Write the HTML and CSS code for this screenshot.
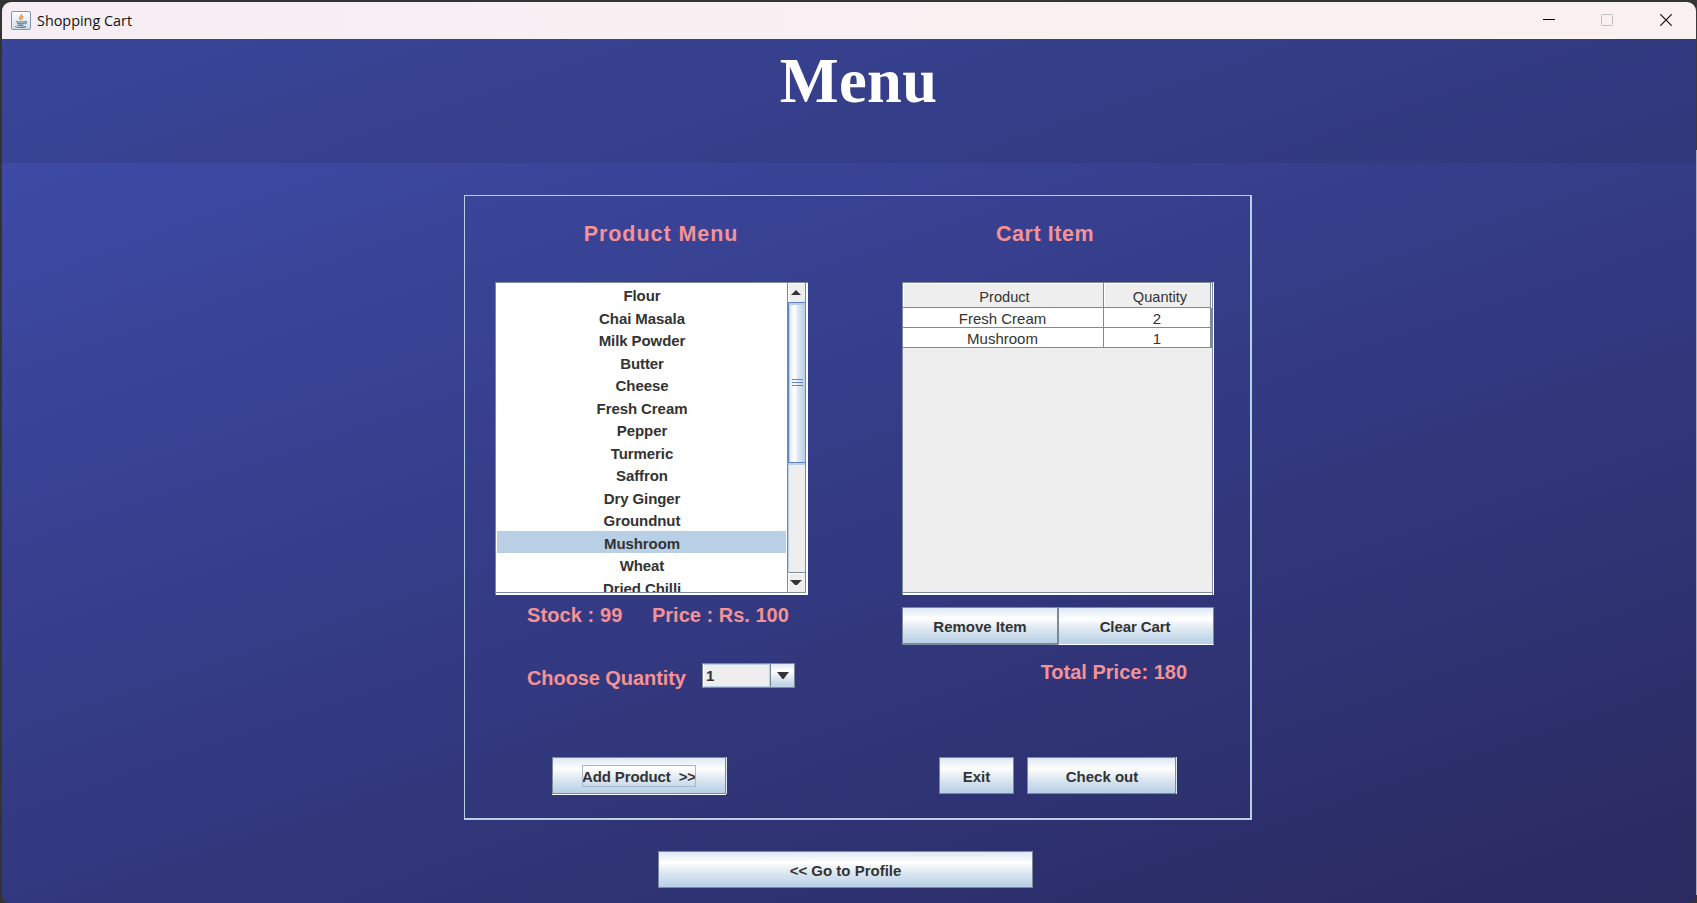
FILE: index.html
```html
<!DOCTYPE html>
<html lang="en">
<head>
<meta charset="utf-8">
<title>Shopping Cart</title>
<link rel="stylesheet" href="styles.css">
</head>
<body>
<div class="window">
  <header class="titlebar">
    <svg class="app-icon" width="20" height="20" viewBox="0 0 20 20">
      <defs><linearGradient id="ig" x1="0" y1="0" x2="0" y2="1"><stop offset="0" stop-color="#fff"/><stop offset="1" stop-color="#cfdce6"/></linearGradient></defs>
      <rect x=".5" y=".5" width="19" height="18" rx="1.5" fill="url(#ig)" stroke="#7d97ab"/>
      <path d="M10.500 3.200c1.200 1.600-2.600 2.600-1.800 4.300.4.8 1 1.100 1.200 1.800M12.300 5.400c-1.600.9-2 1.700-1.100 2.900" fill="none" stroke="#e8873e" stroke-width="1.400"/>
      <path d="M5 10.500c2 .7 6.500.7 9 0M6 12.300c2 .6 5.500.6 7.200 0M6.500 14c2 .6 4.500.6 6 0M4 15.800c3 .9 8.500.9 11-.2M14 10.600c2-.4 1.900 1.700-.4 2.300" fill="none" stroke="#5f8196" stroke-width="1.200"/>
    </svg>
    <span class="title">Shopping Cart</span>
    <div class="controls">
      <svg width="12" height="12" viewBox="0 0 12 12"><path d="M0 5.500h12" stroke="#000"/></svg>
      <svg width="12" height="12" viewBox="0 0 12 12"><rect x=".5" y=".5" width="11" height="11" rx="1" fill="none" stroke="#c3bfc0"/></svg>
      <svg class="close" width="12" height="12" viewBox="0 0 12 12"><path d="M.3.3l11.400 11.400M11.700.3L.3 11.700" stroke="#111" stroke-width="1.200"/></svg>
    </div>
  </header>
  <main class="content">
    <div class="banner"><h1>Menu</h1></div>
    <section class="panel">
      <div class="col products">
        <h2>Product Menu</h2>
        <div class="list">
          <ul>
            <li>Flour</li><li>Chai Masala</li><li>Milk Powder</li><li>Butter</li><li>Cheese</li><li>Fresh Cream</li><li>Pepper</li><li>Turmeric</li><li>Saffron</li><li>Dry Ginger</li><li>Groundnut</li><li class="selected">Mushroom</li><li>Wheat</li><li>Dried Chilli</li>
          </ul>
          <div class="scrollbar">
            <div class="arrow up"><svg width="10" height="5" viewBox="0 0 10 5"><path d="M5 0l5 5H0z" fill="#333"/></svg></div>
            <div class="thumb"><i></i><i></i><i></i></div>
            <div class="track"></div>
            <div class="arrow down"><svg width="12" height="5" viewBox="0 0 12 5"><path d="M0 0h12L7 5H5z" fill="#333"/></svg></div>
          </div>
        </div>
        <div class="info"><span class="stock">Stock : 99</span><span class="price">Price : Rs. 100</span></div>
        <div class="quantity">
          <label>Choose Quantity</label>
          <div class="combo"><span>1</span><b><svg width="12" height="7" viewBox="0 0 12 7"><path d="M0 0h12L6.500 7h-1z" fill="#333"/></svg></b></div>
        </div>
        <button class="btn add"><span>Add Product&nbsp; &gt;&gt;</span></button>
      </div>
      <div class="col cart">
        <h2>Cart Item</h2>
        <div class="table">
          <div class="tr th"><span>Product</span><span>Quantity</span></div>
          <div class="tr"><span>Fresh Cream</span><span>2</span></div>
          <div class="tr"><span>Mushroom</span><span>1</span></div>
        </div>
        <div class="pair"><button class="btn remove">Remove Item</button><button class="btn clear">Clear Cart</button></div>
        <p class="total">Total Price: 180</p>
        <div class="actions"><button class="btn exit">Exit</button><button class="btn checkout">Check out</button></div>
      </div>
    </section>
    <button class="btn profile">&lt;&lt; Go to Profile</button>
  </main>
</div>
</body>
</html>
```
FILE: styles.css
```css
* { box-sizing: border-box; }
body { margin: 0; height: 903px; overflow: hidden; background: linear-gradient(#3a3a3a 150px, #a9abb8 150px, #a9abb8 895px, #333 895px) right / 1px 100% no-repeat #343434; font-family: "Liberation Sans", Arial, sans-serif; color: #333; }
.window { margin: 2px 1px 0 2px; height: 901px; border-radius: 9px 9px 8px 8px; overflow: hidden; display: flex; flex-direction: column; }
.titlebar { height: 37px; flex: none; display: flex; align-items: center; padding: 0 24px 0 9px; background: linear-gradient(90deg, #f7eef5, #f9f0f1 70%); }
.app-icon { flex: none; }
.title { margin: 0 0 0 6px; font: 14.4px "Open Sans", sans-serif; color: #111; white-space: nowrap; }
.controls { margin: -1px 0 0 auto; display: flex; gap: 46px; }
.controls svg { display: block; }
.controls .close { margin-left: 1px; }
.content { flex: 1; display: flex; flex-direction: column; background: linear-gradient(161deg, #3f4dab 0%, #2a2a60 100%); }
.banner { height: 124px; flex: none; background: rgba(33, 42, 82, .2); padding-left: 19px; text-align: center; }
h1 { margin: 0; padding-top: 6px; font: bold 62.5px/72px "Liberation Serif", "Times New Roman", serif; letter-spacing: .3px; color: #fff; }
.panel { width: 788px; height: 625px; margin: 32px 0 0 462px; border: solid #b8cfe5; border-width: 1px 2px 2px 1px; display: flex; flex: none; padding: 0 36px 0 30px; justify-content: space-between; }
h2 { margin: 0; padding-top: 25px; height: 86px; font-size: 21.5px; line-height: 27px; text-align: center; color: #f59295; letter-spacing: .95px; white-space: nowrap; }
.cart h2 { letter-spacing: .55px; padding-right: 26px; }
.products { width: 313px; }
.products h2 { padding-left: 19px; }
.cart { width: 312px; }
.list { height: 313px; border: solid #7a8a99; border-width: 1px 0 0 1px; background: #fff; display: flex; }
ul { list-style: none; margin: 0; padding: 0 1px; width: 291px; height: 310px; overflow: hidden; font-weight: bold; font-size: 15px; letter-spacing: -.08px; border-bottom: 1px solid #7a8a99; }
li { height: 22.5px; line-height: 25px; text-align: center; padding-left: 1px; }
li.selected { background: #b8cfe5; }
.scrollbar { width: 19px; height: 310px; border: solid #7a8a99; border-width: 0 1px 1px; display: flex; flex-direction: column; background: #eee; }
.arrow { height: 19px; flex: none; background: #eee; border: solid #fff; border-width: 1px 0 0 1px; display: flex; align-items: center; justify-content: center; padding: 0 2px 1px 0; }
.arrow.down { height: 20px; border-top: 1px solid #7a8a99; box-shadow: inset 0 1px #fff; }
.thumb { height: 161px; flex: none; border: solid #6382bf; border-width: 1px 0 1px 1px; box-shadow: inset 0 2px #b8cfe5, inset 1px 0 #b8cfe5; background: linear-gradient(90deg, #dbe6f1, #fff 35%, #dae6f0 60%, #b8cfe5); display: flex; flex-direction: column; align-items: center; justify-content: center; gap: 2px; }
.thumb i { width: 11px; height: 1px; background: #6382bf; }
.track { flex: 1; border: solid #b8cfe5; border-width: 2px 0 0 1px; }
.info { display: flex; padding-left: 32px; height: 62px; font-size: 20px; font-weight: bold; color: #f59295; line-height: 40px; white-space: pre; }
.stock { width: 125px; letter-spacing: .1px; }
.quantity { display: flex; padding-left: 32px; height: 100px; color: #f59295; font-size: 20px; font-weight: bold; }
.quantity label { width: 175px; line-height: 42px; letter-spacing: -.08px; white-space: nowrap; }
.combo { margin-top: 6px; width: 93px; height: 25px; border: 1px solid #7a8a99; display: flex; font-size: 15px; color: #333; background: #eee; }
.combo span { width: 67px; line-height: 22px; padding-left: 2px; border: 1px solid #b8cfe5; border-left-color: #fff; }
.combo b { flex: 1; border-left: 1px solid #7a8a99; background: linear-gradient(#dde8f3, #fff 30%, #dae5f0 65%, #b8cfe5); display: flex; align-items: center; justify-content: center; }
.btn { display: flex; align-items: center; justify-content: center; padding: 1px 0 0; margin: 0; height: 37px; border: 1px solid #7a8a99; background: linear-gradient(#dde8f3, #fff 30%, #dce7f1 60%, #b8cfe5); font: bold 15px "Liberation Sans", Arial, sans-serif; color: #333; white-space: nowrap; }
.add { margin-left: 57px; width: 174px; box-shadow: 1px 0 #dce6ef, 0 1px #fff; }
.add span { outline: 1px solid #a3b8cc; outline-offset: -1px; height: 22px; line-height: 24px; width: 114px; letter-spacing: -.13px; }
.table { height: 313px; border: 1px solid #7a8a99; border-bottom: 0; background: #eee; width: 311px; box-shadow: inset 0 -2px #fff, inset 0 -3px #7a8a99, 1px 0 #fff; }
.tr { display: flex; height: 20px; width: 309px; font-size: 15px; line-height: 22px; background: #fff; text-align: center; border-bottom: 1px solid #7a8a99; border-right: 2px solid #7a8a99; }
.tr span { flex: 1; }
.tr span:first-child { flex: none; width: 201px; padding-right: 1px; border-right: 1px solid #7a8a99; }
.th { height: 25px; line-height: 28px; width: 308px; background: #eee; box-shadow: inset 0 1px #fff, inset 1px 0 #fff, 1px 0 #fff; border-right-width: 1px; font-size: 14.6px; }
.th span:first-child { padding: 0 0 0 3px; }
.th span:last-child { padding-left: 6px; box-shadow: inset 1px 0 #fff; }
.pair { display: flex; margin-top: 12px; }
.pair .btn { width: 156px; height: 38px; }
.remove { border-bottom-width: 2px; }
.clear { border-bottom: 1px solid #fff; letter-spacing: -.1px; }
.pair .clear { padding-right: 2px; }
.total { margin: 0; height: 112px; padding: 8px 27px 0 0; line-height: 38px; text-align: right; font-size: 20px; font-weight: bold; color: #f59295; }
.actions { display: flex; gap: 13px; padding-left: 37px; }
.exit { width: 75px; }
.checkout { width: 149px; padding-left: 1px; box-shadow: 1px 0 #dce6ef; }
.profile { width: 375px; margin: 31px 0 0 656px; flex: none; }
```
